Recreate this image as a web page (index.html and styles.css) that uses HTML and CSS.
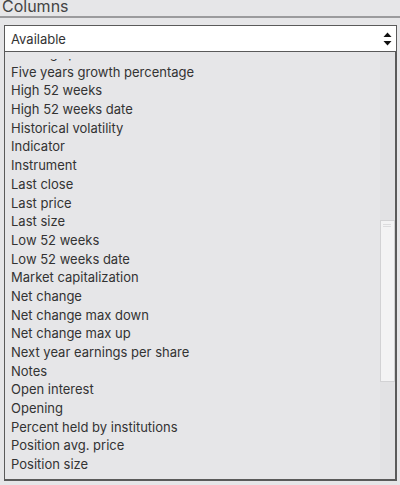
FILE: index.html
```html
<!DOCTYPE html>
<html lang="en">
  <head>
    <meta charset="UTF-8" />
    <title>Columns</title>
    <link rel="stylesheet" href="styles.css">
  </head>
  <body>
    <div class="title">Columns</div>

    <div class="panel">
      <div class="select">
        <span>Available</span>
        <span class="arrows">
          <svg width="9" height="18" viewBox="0 0 9 18">
            <path d="M0.5 7 L4.5 2.5 L8.5 7 Z" fill="#111" />
            <path d="M0.5 11 L4.5 15.5 L8.5 11 Z" fill="#111" />
          </svg>
        </span>
      </div>

      <div class="list">
        <div class="viewport">
          <div class="items">
            <div class="item">Earnings per share</div>
            <div class="item">Five years growth percentage</div>
            <div class="item">High 52 weeks</div>
            <div class="item">High 52 weeks date</div>
            <div class="item">Historical volatility</div>
            <div class="item">Indicator</div>
            <div class="item">Instrument</div>
            <div class="item">Last close</div>
            <div class="item">Last price</div>
            <div class="item">Last size</div>
            <div class="item">Low 52 weeks</div>
            <div class="item">Low 52 weeks date</div>
            <div class="item">Market capitalization</div>
            <div class="item">Net change</div>
            <div class="item">Net change max down</div>
            <div class="item">Net change max up</div>
            <div class="item">Next year earnings per share</div>
            <div class="item">Notes</div>
            <div class="item">Open interest</div>
            <div class="item">Opening</div>
            <div class="item">Percent held by institutions</div>
            <div class="item">Position avg. price</div>
            <div class="item">Position size</div>
          </div>
        </div>
        <!-- fake scrollbar -->
        <div class="scrollbar">
          <div class="thumb"></div>
        </div>
      </div>
    </div>
  </body>
</html>
```

FILE: styles.css
```css
body {
  margin: 0;
  background-color: #e6e6e8;
  font-family: Inter, "DejaVu Sans", sans-serif;
  color: #333;
  width: 400px;
  height: 485px;
  overflow: hidden;
}

.title {
  font-size: 16px;
  line-height: 16px;
  margin-top: -2px;
  padding-left: 2px;
  height: 20px;
  border-bottom: 2px solid #9b9b9d;
  box-sizing: border-box;
  color: #444;
}

.panel {
  padding: 7px 3px 0 4px;
}

.select {
  display: flex;
  align-items: center;
  justify-content: space-between;
  height: 27px;
  box-sizing: border-box;
  border: 1px solid #5a5a5a;
  background-color: #fff;
  padding: 0 4px 0 6px;
  font-size: 13px;
}

.arrows {
  display: flex;
}

.list {
  display: flex;
  height: 429px;
  box-sizing: border-box;
  border: 1px solid #5a5a5a;
  border-top: none;
  border-right-width: 2px;
  border-bottom-width: 2px;
  overflow: hidden;
}

/* the visible part of the scrolled list starts a bit below the select */
.viewport {
  flex: 1;
  margin-top: 7px;
  overflow: hidden;
}

.items {
  margin-top: -15px;
  font-size: 13px;
}

.item {
  height: 18.7px;
  line-height: 18.7px;
  padding-left: 6px;
  white-space: nowrap;
}

.scrollbar {
  width: 15px;
  background-color: #e2e2e4;
  padding-top: 168px;
}

.thumb {
  width: 13px;
  height: 160px;
  background-color: #f3f3f4;
  border: 1px solid #d2d2d4;
  background-image: linear-gradient(#dcdcde, #dcdcde), linear-gradient(#dcdcde, #dcdcde);
  background-size: 8px 1px, 8px 1px;
  background-position: 2px 3px, 2px 5px;
  background-repeat: no-repeat;
}
```
